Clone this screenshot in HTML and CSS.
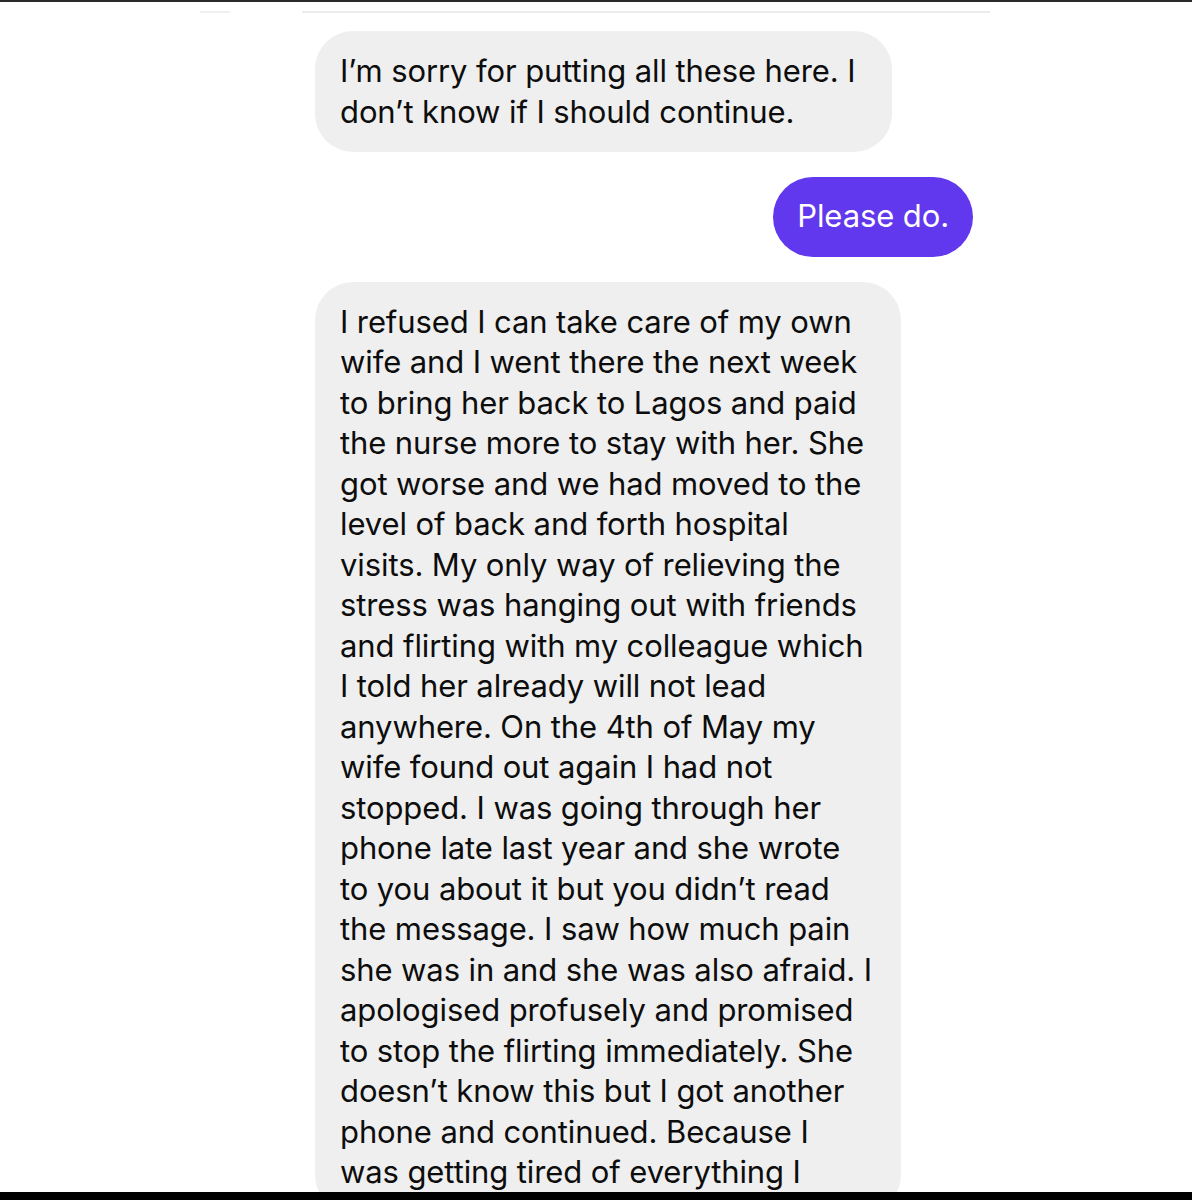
FILE: index.html
```html
<!DOCTYPE html>
<html>
<head>
<meta charset="utf-8">
<link rel="stylesheet" href="styles.css">
</head>
<body>
<div class="screen">
  <div class="topbar">
    <span class="rule rule-short"></span>
    <span class="rule rule-long"></span>
  </div>
  <div class="thread">
    <div class="row row-in">
      <div class="bubble bubble-in b1">I’m sorry for putting all these here. I<br>don’t know if I should continue.</div>
    </div>
    <div class="row row-out">
      <div class="bubble bubble-out">Please do.</div>
    </div>
    <div class="row row-in">
      <div class="bubble bubble-in b3">I refused I can take care of my own<br>wife and I went there the next week<br>to bring her back to Lagos and paid<br>the nurse more to stay with her. She<br>got worse and we had moved to the<br>level of back and forth hospital<br>visits. My only way of relieving the<br>stress was hanging out with friends<br>and flirting with my colleague which<br>I told her already will not lead<br>anywhere. On the 4th of May my<br>wife found out again I had not<br>stopped. I was going through her<br>phone late last year and she wrote<br>to you about it but you didn’t read<br>the message. I saw how much pain<br>she was in and she was also afraid. I<br>apologised profusely and promised<br>to stop the flirting immediately. She<br>doesn’t know this but I got another<br>phone and continued. Because I<br>was getting tired of everything I</div>
    </div>
  </div>
  <div class="bottombar"></div>
</div>
</body>
</html>
```

FILE: styles.css
```css
html, body {
  margin: 0;
  padding: 0;
  background: #ffffff;
}
.screen {
  position: relative;
  width: 1192px;
  height: 1200px;
  overflow: hidden;
  background: #ffffff;
  border-top: 2px solid #2a2a2a;
  box-sizing: border-box;
  font-family: Inter, "Noto Sans", "Liberation Sans", sans-serif;
}
.topbar {
  display: flex;
  align-items: center;
  height: 2px;
  margin-top: 9px;
  padding-left: 200px;
  gap: 72px;
}
.rule {
  display: block;
  height: 2px;
  background: #ececec;
}
.rule-short { width: 30px; background: #f1f1f1; }
.rule-long { width: 688px; }
.thread {
  display: flex;
  flex-direction: column;
  padding: 18px 0 0 315px;
}
.row { display: flex; }
.row-in { justify-content: flex-start; }
.row-out { justify-content: flex-end; width: 658px; }
.bubble {
  font-size: 31px;
  line-height: 40.5px;
  color: #0d0d0d;
  white-space: nowrap;
  letter-spacing: -0.1px;
}
.bubble-in {
  background: #efefef;
  border-radius: 38px;
  padding: 20px 25px;
}
.b1 { width: 527px; }
.b3 { width: 536px; margin-top: 25px; }
.bubble-out {
  margin-top: 25px;
  background: #6138ee;
  color: #ffffff;
  border-radius: 40px;
  padding: 19px 24px 20px;
}
.bottombar {
  position: absolute;
  left: 0;
  right: 0;
  bottom: 0;
  height: 8px;
  background: #000000;
}
```
